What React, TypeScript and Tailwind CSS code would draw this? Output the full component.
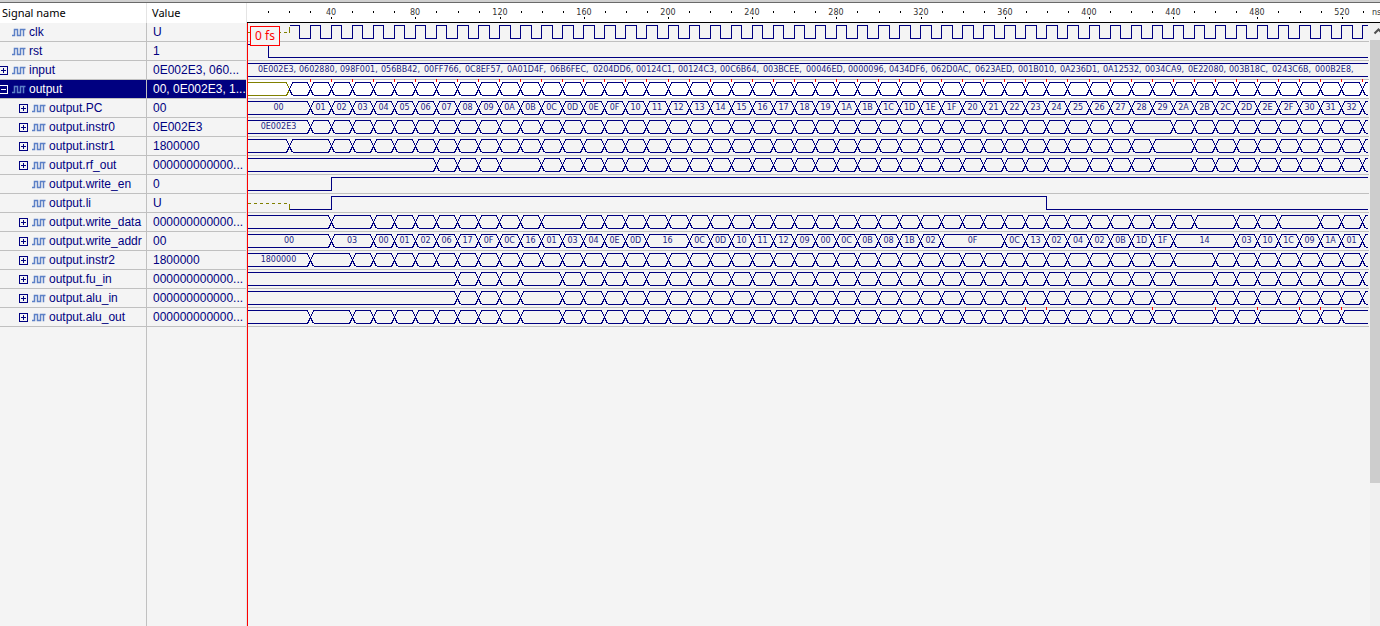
import { useState } from "react";

type Wave = {
  kind: "clock" | "level" | "bus";
  edges?: number[];
  labels?: string[];
  unknownUntil?: number;
  initial?: 0 | 1;
  glitches?: number[];
  values?: string[];
};

type Signal = {
  name: string;
  value: string;
  level: 0 | 1;
  toggle?: "plus" | "minus";
  wave: Wave;
};

const PX_PER_NS = 2.105;
const WIDTH = 1120;
const HIGH = 2;
const LOW = 15;
const MIDDLE = 9;

const xAt = (t: number) => Math.floor(t * PX_PER_NS);
const tickAt = (t: number) => Math.round(t * PX_PER_NS);

function range(from: number, to: number, step = 10): number[] {
  const out: number[] = [];
  for (let t = from; t <= to; t += step) out.push(t);
  return out;
}

const every = (from: number, to: number, skip: number[] = []) =>
  range(from, to).filter((t) => !skip.includes(t));

const PC_LABELS = Array.from({ length: 51 }, (_, i) =>
  i.toString(16).toUpperCase().padStart(2, "0"),
);

const ADDR_LABELS =
  "00 03 00 01 02 06 17 0F 0C 16 01 03 04 0E 0D 16 0C 0D 10 11 12 09 00 0C 0B 08 1B 02 0F 0C 13 02 04 02 0B 1D 1F 14 03 10 1C 09 1A 01".split(
    " ",
  );

const INPUT_VALUES =
  "0E002E3 0602880 098F001 056BB42 00FF766 0C8EF57 0A01D4F 06B6FEC 0204DD6 00124C1 00124C3 00C6B64 003BCEE 00046ED 0000096 0434DF6 062D0AC 0623AED 001B010 0A236D1 0A12532 0034CA9 0E22080 003B18C 0243C6B 000B2E8".split(
    " ",
  );

const ZEROS = "000000000000...";

const SIGNALS: Signal[] = [
  { name: "clk", value: "U", level: 0, wave: { kind: "clock" } },
  { name: "rst", value: "1", level: 0, wave: { kind: "level", initial: 1, edges: [10] } },
  {
    name: "input",
    value: "0E002E3, 060...",
    level: 0,
    toggle: "plus",
    wave: { kind: "bus", edges: [], values: INPUT_VALUES },
  },
  {
    name: "output",
    value: "00, 0E002E3, 1...",
    level: 0,
    toggle: "minus",
    wave: { kind: "bus", edges: every(20, 530), unknownUntil: 20, glitches: every(30, 530) },
  },
  {
    name: "output.PC",
    value: "00",
    level: 1,
    toggle: "plus",
    wave: { kind: "bus", edges: every(30, 530), labels: PC_LABELS },
  },
  {
    name: "output.instr0",
    value: "0E002E3",
    level: 1,
    toggle: "plus",
    wave: { kind: "bus", edges: every(30, 530, [430]), labels: ["0E002E3"] },
  },
  {
    name: "output.instr1",
    value: "1800000",
    level: 1,
    toggle: "plus",
    wave: { kind: "bus", edges: every(20, 530, [30, 440]) },
  },
  {
    name: "output.rf_out",
    value: ZEROS,
    level: 1,
    toggle: "plus",
    wave: { kind: "bus", edges: every(90, 530, [130, 440]) },
  },
  {
    name: "output.write_en",
    value: "0",
    level: 1,
    wave: { kind: "level", initial: 0, edges: [40] },
  },
  {
    name: "output.li",
    value: "U",
    level: 1,
    wave: { kind: "level", initial: 0, edges: [40, 380], unknownUntil: 20 },
  },
  {
    name: "output.write_data",
    value: ZEROS,
    level: 1,
    toggle: "plus",
    wave: { kind: "bus", edges: every(40, 530, [50, 150, 460, 500]) },
  },
  {
    name: "output.write_addr",
    value: "00",
    level: 1,
    toggle: "plus",
    wave: {
      kind: "bus",
      edges: every(40, 530, [50, 200, 340, 350, 450, 460]),
      labels: ADDR_LABELS,
    },
  },
  {
    name: "output.instr2",
    value: "1800000",
    level: 1,
    toggle: "plus",
    wave: { kind: "bus", edges: every(30, 530, [40, 450]), labels: ["1800000"] },
  },
  {
    name: "output.fu_in",
    value: ZEROS,
    level: 1,
    toggle: "plus",
    wave: { kind: "bus", edges: every(100, 530, [140, 450]) },
  },
  {
    name: "output.alu_in",
    value: ZEROS,
    level: 1,
    toggle: "plus",
    wave: { kind: "bus", edges: every(100, 530, [140, 450]) },
  },
  {
    name: "output.alu_out",
    value: ZEROS,
    level: 1,
    toggle: "plus",
    wave: {
      kind: "bus",
      edges: every(30, 520, [40, 140, 450, 490]),
      glitches: [370, 380, 430, 460, 480, 500, 510, 520],
    },
  },
];

// A value takes 41px in the strip, and one more for each wide hex letter.
function valueStarts(values: string[]): number[] {
  let x = 11;
  return values.map((v) => {
    const start = x;
    x += 41 + (v.match(/[ABCD]/g)?.length ?? 0);
    return start;
  });
}

function busPath(from: number, to: number, openLeft: boolean, openRight: boolean) {
  const a = openLeft ? from : from + 3;
  const b = openRight ? to : to - 3;
  let d = `M${a} ${HIGH}H${b}M${a} ${LOW}H${b}`;
  if (!openLeft) d += `M${a} ${HIGH}L${from} ${MIDDLE}L${a} ${LOW}`;
  if (!openRight) d += `M${b} ${HIGH}L${to} ${MIDDLE}L${b} ${LOW}`;
  return d;
}

function Waveform({ wave, selected }: { wave: Wave; selected: boolean }) {
  const navy: string[] = [];
  const olive: string[] = [];
  const labels: { x: number; text: string }[] = [];
  const unknownX = xAt(wave.unknownUntil ?? 0);
  let dashTo = 0;

  if (wave.kind === "clock") {
    const first = xAt(20);
    dashTo = first;
    olive.push(`M${first} ${HIGH + 1}V${MIDDLE}`);
    let d = `M${first} ${HIGH}`;
    for (const t of range(25, 530, 5)) {
      d += `H${xAt(t)}V${t % 10 === 0 ? HIGH : LOW}`;
    }
    navy.push(`${d}H${WIDTH}`);
  } else if (wave.kind === "level") {
    let level = wave.initial ?? 0;
    if (unknownX) {
      dashTo = unknownX;
      olive.push(`M${unknownX} ${MIDDLE}V${LOW}`);
    }
    let d = `M${unknownX} ${level ? HIGH : LOW}`;
    for (const t of wave.edges ?? []) {
      level = level ? 0 : 1;
      d += `H${xAt(t)}V${level ? HIGH : LOW}`;
    }
    navy.push(`${d}H${WIDTH}`);
  } else {
    const stops = [0, ...(wave.edges ?? []).map(xAt), WIDTH];
    for (let i = 0; i < stops.length - 1; i++) {
      const last = i === stops.length - 2;
      const d = busPath(stops[i], stops[i + 1], i === 0, last);
      (i === 0 && unknownX ? olive : navy).push(d);
      const text = wave.labels?.[i];
      if (text) labels.push({ x: (stops[i] + stops[i + 1]) / 2, text });
    }
  }

  const values = wave.values ?? [];
  const starts = valueStarts(values);

  return (
    <svg
      className={`block h-[18px] w-full overflow-visible ${selected ? "bg-white" : ""}`}
      aria-hidden="true"
    >
      <g transform="translate(0.5 0.5)" fill="none" strokeWidth="1" shapeRendering="crispEdges">
        {dashTo > 0 && (
          <path d={`M0 ${MIDDLE}H${dashTo}`} stroke="#808000" strokeDasharray="3 3" />
        )}
        <path d={olive.join("")} stroke="#808000" />
        <path d={navy.join("")} stroke="#000080" />
        <path
          d={(wave.glitches ?? []).map((t) => `M${xAt(t)} -1.5v3`).join("")}
          stroke="#ff0000"
        />
      </g>
      <g className="font-['DejaVu_Sans',sans-serif] text-[8px]" fill="#1c1c84">
        {labels.map((l) => (
          <text key={l.x} x={l.x} y={11} textAnchor="middle">
            {l.text}
          </text>
        ))}
        {values.map((v, i) => (
          <text key={v} x={starts[i]} y={11}>
            {`${v},`}
          </text>
        ))}
      </g>
    </svg>
  );
}

function Ruler() {
  return (
    <svg className="block h-[19px] w-full" role="img" aria-label="Time scale in nanoseconds">
      <g fill="#000000" shapeRendering="crispEdges">
        {range(10, 530).map((t) => (
          <rect key={t} x={tickAt(t)} y={t % 40 === 0 ? 14 : 8} width="1" height="2" />
        ))}
      </g>
      <g className="font-['DejaVu_Sans',sans-serif] text-[8px]" fill="#333333">
        {range(40, 520, 40).map((t) => (
          <text key={t} x={tickAt(t)} y={12} textAnchor="middle">
            {t}
          </text>
        ))}
        <text x={1125} y={12}>
          ns
        </text>
      </g>
    </svg>
  );
}

function WaveIcon() {
  return (
    <svg className="h-[9px] w-[14px] shrink-0" viewBox="0 0 14 9" aria-hidden="true">
      <path
        d="M0 7.5H2.5V1.5H5.5V7.5H8.5V1.5H13.5M11.5 1.5V8.2"
        fill="none"
        stroke="#5c80c6"
        strokeWidth="1.5"
      />
    </svg>
  );
}

function Toggle({
  kind,
  label,
  onClick,
  inverse,
}: {
  kind: "plus" | "minus";
  label: string;
  onClick?: () => void;
  inverse: boolean;
}) {
  const ink = inverse ? "#ffffff" : "#000080";
  return (
    <button type="button" aria-label={label} onClick={onClick} className="block size-[9px]">
      <svg viewBox="0 0 9 9" className="block size-[9px]" shapeRendering="crispEdges">
        <path
          d={kind === "plus" ? "M.5.5h8v8h-8zM2 4.5h5M4.5 2v5" : "M.5.5h8v8h-8zM2 4.5h5"}
          fill="none"
          stroke={ink}
        />
      </svg>
    </button>
  );
}

export default function App() {
  const [open, setOpen] = useState(true);
  const visible = SIGNALS.filter((s) => open || s.level === 0);

  return (
    <div className="flex h-screen flex-col overflow-hidden bg-[#f4f4f4] font-['Liberation_Sans',Arial,sans-serif] text-xs text-[#000080]">
      <div className="h-[3px] shrink-0 border-b border-[#696969] bg-[#d0d0d0]" />
      <main className="flex min-h-0 flex-1">
        <section className="flex w-[247px] shrink-0 flex-col border-r border-[#e4e4e4]">
          <table className="w-full table-fixed border-separate border-spacing-0">
            <colgroup>
              <col className="w-[147px]" />
              <col />
            </colgroup>
            <thead>
              <tr className="h-5 bg-white text-left font-['Noto_Sans',sans-serif] text-[11px] text-black">
                <th scope="col" className="border-r border-[#e4e4e4] p-0 pl-0.5 font-normal">
                  <div className="leading-5">Signal name</div>
                </th>
                <th scope="col" className="p-0 pl-[5px] font-normal">
                  <div className="leading-5">Value</div>
                </th>
              </tr>
            </thead>
            <tbody>
              {visible.map((s) => {
                const selected = s.name === "output";
                return (
                  <tr key={s.name} className={selected ? "bg-[#000080] text-white" : ""}>
                    <td className="border-r border-b border-[#c0c0c0] p-0">
                      <div
                        className={`flex h-[18px] items-center ${s.level ? "pl-[19px]" : "-ml-px"}`}
                      >
                        <span className="w-[13px] shrink-0">
                          {s.toggle && (
                            <Toggle
                              kind={s.toggle === "minus" && !open ? "plus" : s.toggle}
                              label={`Expand or collapse ${s.name}`}
                              inverse={selected}
                              onClick={selected ? () => setOpen(!open) : undefined}
                            />
                          )}
                        </span>
                        <WaveIcon />
                        <span className="pl-[3px] leading-[18px] whitespace-nowrap">{s.name}</span>
                      </div>
                    </td>
                    <td className="border-b border-[#c0c0c0] p-0 pl-1.5">
                      <div className="h-[18px] overflow-hidden leading-[18px] whitespace-nowrap">
                        {s.value}
                      </div>
                    </td>
                  </tr>
                );
              })}
            </tbody>
          </table>
          <div className="w-[147px] flex-1 border-r border-[#c0c0c0]" />
        </section>

        <section className="flex min-w-0 flex-1 flex-col">
          <div className="shrink-0 border-b border-black bg-white">
            <Ruler />
          </div>
          <div className="flex min-h-0 flex-1">
            <div className="relative min-w-0 flex-1 pr-px">
              {visible.map((s) => (
                <div key={s.name} className="border-b border-[#c0c0c0]">
                  <Waveform wave={s.wave} selected={s.name === "output"} />
                </div>
              ))}
              <div className="absolute inset-y-0 left-0 w-px bg-[#ff0000]" />
              <div className="absolute top-[3px] left-[3px] flex h-5 w-[30px] items-center justify-center border border-[#ff0000] bg-[#f4f4f4] font-['Noto_Sans',sans-serif] text-xs whitespace-nowrap text-[#ff0000]">
                0 fs
              </div>
            </div>
            <div className="flex w-[10px] shrink-0 flex-col overflow-hidden bg-[#f0f0f0]">
              <button type="button" aria-label="Scroll up" className="h-[17px] w-[17px] shrink-0">
                <svg viewBox="0 0 17 17" className="block size-[17px]">
                  <path d="M4.5 10.5L8.5 6.5L12.5 10.5" fill="none" stroke="#505050" strokeWidth="2" />
                </svg>
              </button>
              <div className="h-[443px] w-full bg-[#cdcdcd]" />
            </div>
          </div>
        </section>
      </main>
    </div>
  );
}
